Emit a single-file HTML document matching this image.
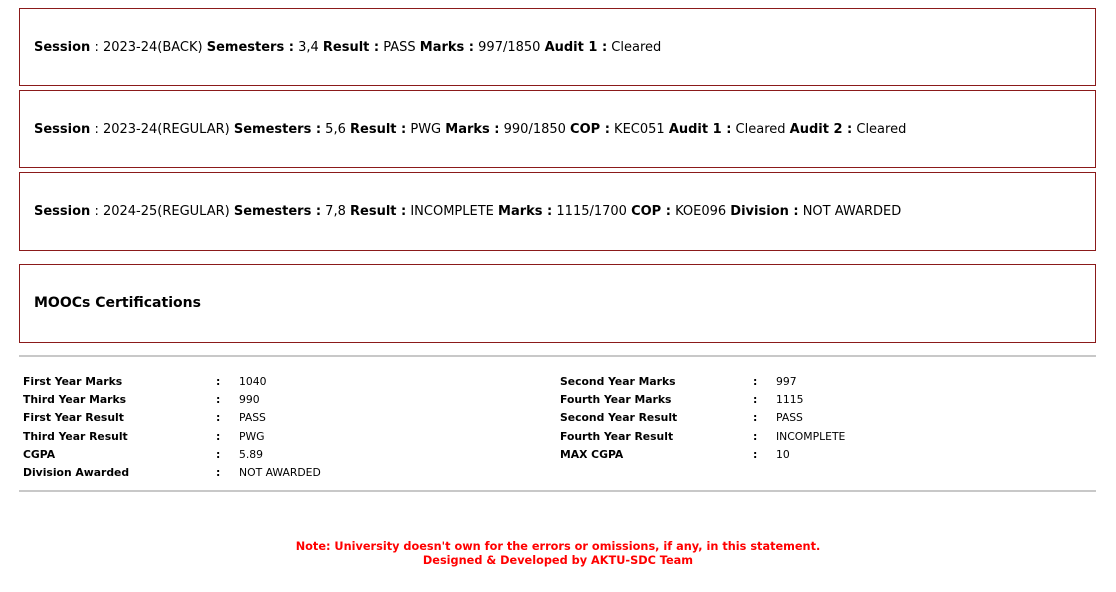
<!DOCTYPE html>
<html><head><meta charset="utf-8"><style>
body{margin:0;width:1116px;height:592px;background:#fff;font-family:"DejaVu Sans","Liberation Sans",sans-serif;color:#000;position:relative;overflow:hidden}
.box{position:absolute;left:19px;width:1075px;border:1px solid #8b1a1a;font-size:13px;}
.box span{position:absolute;left:14px;white-space:nowrap}
b{font-weight:bold}
.hr{position:absolute;left:19px;width:1077px;height:0;border-top:2px solid #c8c8c8}
.t{position:absolute;font-size:10.8px;white-space:nowrap}
.note{position:absolute;left:0;width:1116px;text-align:center;color:#ff0000;font-weight:bold;font-size:11.3px;line-height:14px}
</style></head><body>
<div class="box" style="top:8px;height:76px"><span style="top:31px"><b>Session</b> : 2023-24(BACK) <b>Semesters :</b> 3,4 <b>Result :</b> PASS <b>Marks :</b> 997/1850 <b>Audit 1 :</b> Cleared</span></div>
<div class="box" style="top:90px;height:76px"><span style="top:31px"><b>Session</b> : 2023-24(REGULAR) <b>Semesters :</b> 5,6 <b>Result :</b> PWG <b>Marks :</b> 990/1850 <b>COP :</b> KEC051 <b>Audit 1 :</b> Cleared <b>Audit 2 :</b> Cleared</span></div>
<div class="box" style="top:172px;height:77px"><span style="top:31px"><b>Session</b> : 2024-25(REGULAR) <b>Semesters :</b> 7,8 <b>Result :</b> INCOMPLETE <b>Marks :</b> 1115/1700 <b>COP :</b> KOE096 <b>Division :</b> NOT AWARDED</span></div>
<div class="box" style="top:264px;height:77px"><span style="top:30px;font-size:14px;font-weight:bold">MOOCs Certifications</span></div>
<div class="hr" style="top:355px"></div>
<div class="hr" style="top:490px"></div>

<div class="t" style="left:23px;top:373px;line-height:18.2px;font-weight:bold">First Year Marks<br>Third Year Marks<br>First Year Result<br>Third Year Result<br>CGPA<br>Division Awarded</div>
<div class="t" style="left:216px;top:373px;line-height:18.2px;font-weight:bold">:<br>:<br>:<br>:<br>:<br>:</div>
<div class="t" style="left:239px;top:373px;line-height:18.2px">1040<br>990<br>PASS<br>PWG<br>5.89<br>NOT AWARDED</div>
<div class="t" style="left:560px;top:373px;line-height:18.2px;font-weight:bold">Second Year Marks<br>Fourth Year Marks<br>Second Year Result<br>Fourth Year Result<br>MAX CGPA</div>
<div class="t" style="left:753px;top:373px;line-height:18.2px;font-weight:bold">:<br>:<br>:<br>:<br>:</div>
<div class="t" style="left:776px;top:373px;line-height:18.2px">997<br>1115<br>PASS<br>INCOMPLETE<br>10</div>

<div class="note" style="top:540px">Note: University doesn't own for the errors or omissions, if any, in this statement.<br>Designed &amp; Developed by AKTU-SDC Team</div>
</body></html>
